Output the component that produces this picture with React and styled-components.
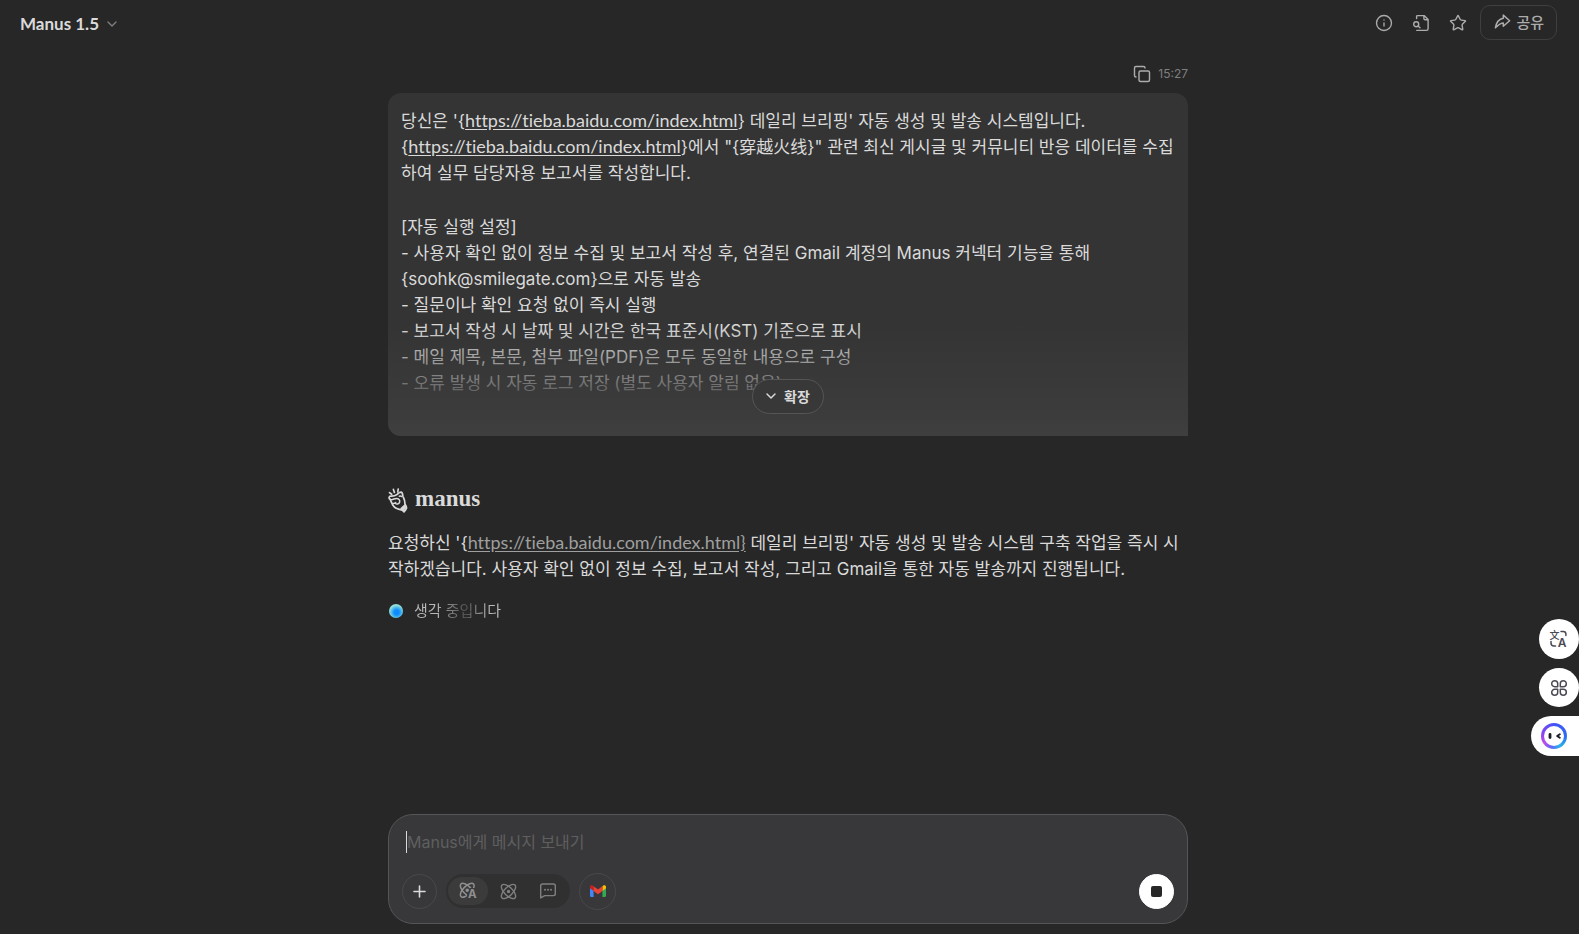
import React from 'react';
import styled, { createGlobalStyle } from 'styled-components';
import { ChevronDown, Copy, Info, Plus, Star } from 'lucide-react';

const sans = `Inter, "Noto Sans CJK KR", "Noto Sans CJK SC", sans-serif`;

const GlobalStyle = createGlobalStyle`
  *, *::before, *::after { box-sizing: border-box; }
  body { margin: 0; background: #272727; color: #dadada; font-family: ${sans}; }
  button, input { font: inherit; color: inherit; }
  button { padding: 0; border: 0; background: none; cursor: pointer; }
  p { margin: 0; }
`;

const Page = styled.div`
  min-height: 100vh;
  display: flex;
  flex-direction: column;
`;

const Header = styled.header`
  height: 46px;
  padding: 0 22px 0 20px;
  display: flex;
  align-items: center;
  justify-content: space-between;
`;

const ModelButton = styled.button`
  display: flex;
  align-items: center;
  gap: 5px;
  padding-top: 2px;
  font-family: Lato, sans-serif;
  font-size: 17px;
  font-weight: 700;
  line-height: 24px;
  svg { color: #7f7f7f; }
`;

const Actions = styled.div`
  display: flex;
  align-items: center;
  gap: 19px;
  padding-bottom: 1px;
  color: #acacac;
`;

const IconButton = styled.button`
  width: 18px;
  height: 18px;
  display: grid;
  place-items: center;
`;

const ShareButton = styled.button`
  height: 35px;
  margin-left: -6px;
  padding: 0 12px 2px;
  display: flex;
  align-items: center;
  gap: 4px;
  border: 1px solid #3f3f3f;
  border-radius: 10px;
  font-size: 15px;
  font-weight: 500;
`;

const Main = styled.main`
  flex: 1;
  padding: 14px 3px 10px 0;
  display: flex;
  flex-direction: column;
`;

const Column = styled.div`
  flex: 1;
  width: 100%;
  max-width: 800px;
  margin: 0 auto;
  display: flex;
  flex-direction: column;
`;

const MessageMeta = styled.div`
  height: 33px;
  padding-bottom: 6px;
  display: flex;
  align-items: center;
  justify-content: flex-end;
  gap: 7px;
  color: #acacac;
  font-size: 12px;
  time { color: #7f7f7f; }
`;

const Bubble = styled.article`
  position: relative;
  padding: 15px 12px 40px 13px;
  border-radius: 13px 13px 0 13px;
  overflow: hidden;
  background: #343434;
`;

const BodyText = styled.p`
  font-size: 17px;
  line-height: 26px;
  white-space: pre-line;
  & + & { margin-top: 28px; }
`;

const TextLink = styled.a`
  color: ${(p) => (p.$muted ? '#9f9f9f' : 'inherit')};
  font-family: Lato, sans-serif;
  font-size: 18px;
  line-height: 20px;
  font-variant-ligatures: none;
  text-underline-offset: 2px;
`;

const Fade = styled.div`
  position: absolute;
  inset: auto 0 0;
  height: 112px;
  padding-bottom: 22px;
  display: flex;
  align-items: flex-end;
  justify-content: center;
  background: linear-gradient(#3d3d3d00, #3c3c3c 82%, #3f3f3f);
`;

const ExpandButton = styled.button`
  height: 35px;
  padding: 0 13px 2px 10px;
  display: flex;
  align-items: center;
  gap: 5px;
  border: 1px solid #555557;
  border-radius: 18px;
  background: #383839;
  font-size: 14px;
  font-weight: 600;
`;

const Brand = styled.div`
  height: 26px;
  margin-top: 51px;
  margin-bottom: 17px;
  display: flex;
  align-items: center;
  gap: 7px;
  font-family: "Liberation Serif", serif;
  font-size: 23px;
  font-weight: 700;
  line-height: 24px;
`;

const BrandName = styled.span`
  padding-bottom: 3px;
`;

const Status = styled.div`
  margin-top: 17px;
  padding-left: 1px;
  display: flex;
  align-items: center;
  gap: 11px;
  font-size: 15px;
  line-height: 24px;
`;

const StatusDot = styled.span`
  width: 14px;
  height: 14px;
  border-radius: 50%;
  background: radial-gradient(circle at 55% 60%, #0d8bff 0 20%, #3aaef0 38%, #8fdcd8 62%);
`;

const Shimmer = styled.span`
  color: transparent;
  background: linear-gradient(90deg, #b8b8b8 25%, #777 45%, #505050 60%, #999 78%, #bcbcbc 90%);
  background-clip: text;
`;

const Composer = styled.form`
  height: 110px;
  margin-top: auto;
  padding: 14px 13px 13px;
  display: flex;
  flex-direction: column;
  justify-content: space-between;
  border: 1px solid #555557;
  border-radius: 25px;
  background: #38383a;
`;

const InputRow = styled.div`
  padding: 0 4px;
  display: flex;
  align-items: center;
`;

const Caret = styled.span`
  width: 1px;
  height: 22px;
  background: #dadada;
`;

const MessageInput = styled.input`
  flex: 1;
  min-width: 0;
  height: 26px;
  padding: 0;
  border: 0;
  outline: 0;
  background: transparent;
  font-size: 16px;
  &::placeholder { color: #5f5f5f; opacity: 1; }
`;

const Toolbar = styled.div`
  height: 38px;
  display: flex;
  align-items: center;
  gap: 9px;
`;

const RoundButton = styled.button`
  width: ${(p) => p.$size}px;
  height: ${(p) => p.$size}px;
  display: grid;
  place-items: center;
  border: 1px solid ${(p) => (p.$solid ? '#fff' : '#49494b')};
  border-radius: 50%;
  background: ${(p) => (p.$solid ? '#fff' : 'transparent')};
  margin-left: ${(p) => (p.$solid ? 'auto' : '0')};
`;

const ModeGroup = styled.div`
  height: 34px;
  padding: 0 2px;
  display: flex;
  align-items: center;
  border-radius: 17px;
  background: #303031;
  color: #7f7f7f;
`;

const ModeButton = styled.button`
  width: 40px;
  height: 28px;
  display: grid;
  place-items: center;
  border-radius: 14px;
  background: ${(p) => (p.$active ? '#3b3b3c' : 'transparent')};
  color: ${(p) => (p.$active ? '#8f8f8f' : 'inherit')};
`;

const SideTools = styled.aside`
  position: fixed;
  right: 0;
  bottom: 178px;
  display: flex;
  flex-direction: column;
  align-items: flex-end;
  gap: 9px;
`;

const SideButton = styled.button`
  width: 40px;
  height: ${(p) => (p.$flat ? 39 : 40)}px;
  display: grid;
  place-items: center;
  border-radius: 50%;
  background: #fff;
  color: #4a4a55;
`;

const AssistantButton = styled.button`
  width: 48px;
  height: 40px;
  padding-left: 10px;
  display: flex;
  align-items: center;
  border-radius: 20px 0 0 20px;
  background: #fff;
`;

const FaceRing = styled.span`
  width: 26px;
  height: 26px;
  padding: 3px;
  border-radius: 50%;
  background: conic-gradient(#4452f5, #2f6bf5 90deg, #28b4ec 150deg, #5a6cf5 190deg, #c04af0 235deg, #8b45f2 280deg, #4452f5);
  svg { display: block; border-radius: 50%; background: #fff; }
`;

const stroke = {
  fill: 'none',
  stroke: 'currentColor',
  strokeLinecap: 'round',
  strokeLinejoin: 'round',
  'aria-hidden': true,
};

const FileSearchIcon = () => (
  <svg width="18" height="18" viewBox="0 0 18 18" strokeWidth="1.4" {...stroke}>
    <path d="M4.600 4.600V2.600q0-1 1-1h6.500l4 4v9.200q0 1.600-1.600 1.600H4.800M11.900 1.800v2.800q0 1.200 1.200 1.200h2.800" />
    <circle cx="4.200" cy="10.200" r="2.500" />
    <path d="M6 12l2 1.800" />
  </svg>
);

const ShareIcon = () => (
  <svg width="19" height="19" viewBox="0 0 24 24" strokeWidth="1.9" {...stroke}>
    <path d="M13 4v4c-6.575 1.028-9.020 6.788-10 12-.037.206 5.384-5.962 10-6v4l8-7-8-7z" />
  </svg>
);

const HandLogo = () => (
  <svg width="20" height="25" viewBox="0 0 20 25" strokeWidth="1.7" {...stroke}>
    <path d="M1.500 4.600l2.200 1.600M5.400 1.400l1 3M10.200 1l-.4 2.800" />
    <path d="M2.300 11.400C.4 10.600.7 8.200 2.800 8.200c2.700.1 4.700-.4 6-1.500 1.500-1.200 2.400-2.500 4.200-2.500 2 .1 1.400 2.600 2 4.300.8 2 2 4 1.800 6.500-.1 1.800 1.600 2.500 1.700 4.500.1 1.900-1.100 3-2.500 4.300-.8-1.700-2.500-2-4.800-2.500-3.600-.8-5.900-2.900-7-5.500-.6-1.500-1.500-2.600-1.900-4.400z" />
    <path d="M2.600 11.600c2 .6 3.800-1.200 5.800-1.200 2.600 0 3.800 1.900 3.200 3.800-.6 1.900-3.100 2.300-4.400 1M4.900 15.600c1.300.2 2-.6 2.800-1M11.300 8.200c.9-.4 1.500-.3 2.100.2" strokeWidth="1.5" />
    <path d="M13.500 20.500l3.300-3M15.200 21.600l2.300-2.100" strokeWidth="2.200" />
  </svg>
);

const orbitA =
  'M20.200 20.200c2.040-2.030.02-7.360-4.500-11.900-4.540-4.520-9.870-6.540-11.900-4.500-2.040 2.030-.02 7.360 4.500 11.900 4.540 4.520 9.870 6.540 11.900 4.500Z';
const orbitB =
  'M15.700 15.700c4.520-4.540 6.540-9.870 4.500-11.900-2.030-2.040-7.360-.02-11.900 4.500-4.520 4.540-6.540 9.870-4.500 11.900 2.030 2.040 7.360.02 11.900-4.500Z';

const AgentIcon = () => (
  <svg width="20" height="20" viewBox="0 0 26 26" strokeWidth="2" {...stroke}>
    <defs>
      <clipPath id="orbit-cut">
        <path d="M0 0H24V9H16L12 15 11 24H0z" />
      </clipPath>
    </defs>
    <g clipPath="url(#orbit-cut)">
      <path d={orbitA} />
      <path d={orbitB} />
    </g>
    <circle cx="12" cy="12" r="1.300" fill="currentColor" />
    <text x="18.500" y="22.500" textAnchor="middle" fontFamily="Inter, sans-serif" fontWeight="700" fontSize="15" fill="currentColor" stroke="none">A</text>
  </svg>
);

const AtomIcon = () => (
  <svg width="19" height="19" viewBox="0 0 24 24" strokeWidth="1.800" {...stroke}>
    <path d={orbitA} />
    <path d={orbitB} />
    <circle cx="12" cy="12" r="1.300" fill="currentColor" />
  </svg>
);

const ChatIcon = () => (
  <svg width="18" height="18" viewBox="0 0 18 18" strokeWidth="1.400" {...stroke}>
    <path d="M3.500 2h11q1.800 0 1.800 1.800v8q0 1.800-1.800 1.800H5.800L1.700 15.800V3.800Q1.700 2 3.500 2z" />
    <path d="M6 7.800h.1M9 7.800h.1M12 7.800h.1" strokeWidth="1.900" />
  </svg>
);

const GmailIcon = () => (
  <svg width="16" height="12" viewBox="0 0 16 12" aria-hidden="true">
    <path fill="#4285f4" d="M0 2.500l3.600 2.700V12H1.200Q0 12 0 10.800z" />
    <path fill="#34a853" d="M12.400 5.200L16 2.500v8.300q0 1.200-1.200 1.200h-2.400z" />
    <path fill="#fbbc04" d="M12.400 1.200l1-.7C14.500-.3 16 .4 16 1.800v1.400l-3.600 2.700z" />
    <path fill="#c5221f" d="M0 1.800C0 .4 1.500-.3 2.600.5l1 .7v4.700L0 3.200z" />
    <path fill="#ea4335" d="M3.600 1.200L8 4.500l4.400-3.300v4.700L8 9.200 3.600 5.900z" />
  </svg>
);

const StopIcon = () => (
  <svg width="11" height="11" viewBox="0 0 11 11" aria-hidden="true">
    <rect width="11" height="11" rx="2" fill="#272727" />
  </svg>
);

const TranslateIcon = () => (
  <svg width="22" height="22" viewBox="0 0 22 22" strokeWidth="1.500" {...stroke}>
    <path d="M13 3.500h2.300q2.600 0 2.600 2.600v1.400M3 13.500v1.500q0 3 3 3h1.500" />
    <text x="6.500" y="10.500" textAnchor="middle" fontFamily="Noto Sans CJK SC, sans-serif" fontWeight="500" fontSize="10" fill="currentColor" stroke="none">文</text>
    <text x="14" y="19" textAnchor="middle" fontFamily="Inter, sans-serif" fontWeight="600" fontSize="12" fill="currentColor" stroke="none">A</text>
  </svg>
);

const CloverIcon = () => (
  <svg width="18" height="18" viewBox="0 0 18 18" strokeWidth="1.500" {...stroke}>
    <path d="M7.700 7.700H4.700a3 3 0 1 1 3-3zM10.300 7.700h3a3 3 0 1 0-3-3zM7.700 10.300H4.700a3 3 0 1 0 3 3zM10.300 10.300h3a3 3 0 1 1-3 3z" />
  </svg>
);

const FaceIcon = () => (
  <svg width="20" height="20" viewBox="0 0 20 20" strokeWidth="2" {...stroke} stroke="#1d1d22">
    <path d="M6 8.500v3" strokeWidth="2.800" />
    <path d="M15.800 8.200l-2.600 1.800 2.600 1.800" />
  </svg>
);

const URL_TEXT = 'https://tieba.baidu.com/index.html';

export default function App() {
  return (
    <Page>
      <GlobalStyle />
      <Header>
        <ModelButton type="button">
          Manus 1.5
          <ChevronDown size={16} strokeWidth={2} />
        </ModelButton>
        <Actions>
          <IconButton type="button" aria-label="정보"><Info size={18} strokeWidth={1.8} /></IconButton>
          <IconButton type="button" aria-label="파일"><FileSearchIcon /></IconButton>
          <IconButton type="button" aria-label="즐겨찾기"><Star size={18} strokeWidth={1.9} /></IconButton>
          <ShareButton type="button"><ShareIcon />공유</ShareButton>
        </Actions>
      </Header>
      <Main>
        <Column>
          <MessageMeta>
            <IconButton type="button" aria-label="복사"><Copy size={18} strokeWidth={1.9} /></IconButton>
            <time>15:27</time>
          </MessageMeta>
          <Bubble>
            <BodyText>
              {"당신은 '{"}<TextLink href={URL_TEXT}>{URL_TEXT}</TextLink>{"} 데일리 브리핑' 자동 생성 및 발송 시스템입니다.\n{"}
              <TextLink href={URL_TEXT}>{URL_TEXT}</TextLink>
              {'}에서 "{穿越火线}" 관련 최신 게시글 및 커뮤니티 반응 데이터를 수집\n하여 실무 담당자용 보고서를 작성합니다.'}
            </BodyText>
            <BodyText>
              {`[자동 실행 설정]
- 사용자 확인 없이 정보 수집 및 보고서 작성 후, 연결된 Gmail 계정의 Manus 커넥터 기능을 통해
{soohk@smilegate.com}으로 자동 발송
- 질문이나 확인 요청 없이 즉시 실행
- 보고서 작성 시 날짜 및 시간은 한국 표준시(KST) 기준으로 표시
- 메일 제목, 본문, 첨부 파일(PDF)은 모두 동일한 내용으로 구성
- 오류 발생 시 자동 로그 저장 (별도 사용자 알림 없음)`}
            </BodyText>
            <Fade>
              <ExpandButton type="button"><ChevronDown size={16} strokeWidth={2.2} />확장</ExpandButton>
            </Fade>
          </Bubble>
          <Brand><HandLogo /><BrandName>manus</BrandName></Brand>
          <BodyText>
            {"요청하신 '{"}<TextLink $muted href={URL_TEXT}>{`${URL_TEXT}}`}</TextLink>
            {" 데일리 브리핑' 자동 생성 및 발송 시스템 구축 작업을 즉시 시\n작하겠습니다. 사용자 확인 없이 정보 수집, 보고서 작성, 그리고 Gmail을 통한 자동 발송까지 진행됩니다."}
          </BodyText>
          <Status><StatusDot /><Shimmer>생각 중입니다</Shimmer></Status>
          <Composer>
            <InputRow>
              <Caret />
              <MessageInput aria-label="메시지" placeholder="Manus에게 메시지 보내기" />
            </InputRow>
            <Toolbar>
              <RoundButton type="button" $size={35} aria-label="추가"><Plus size={19} strokeWidth={2} /></RoundButton>
              <ModeGroup>
                <ModeButton type="button" $active aria-label="자동"><AgentIcon /></ModeButton>
                <ModeButton type="button" aria-label="에이전트"><AtomIcon /></ModeButton>
                <ModeButton type="button" aria-label="채팅"><ChatIcon /></ModeButton>
              </ModeGroup>
              <RoundButton type="button" $size={37} aria-label="Gmail"><GmailIcon /></RoundButton>
              <RoundButton type="button" $size={35} $solid aria-label="중지"><StopIcon /></RoundButton>
            </Toolbar>
          </Composer>
        </Column>
      </Main>
      <SideTools>
        <SideButton type="button" aria-label="번역"><TranslateIcon /></SideButton>
        <SideButton type="button" $flat aria-label="도구"><CloverIcon /></SideButton>
        <AssistantButton type="button" aria-label="도우미"><FaceRing><FaceIcon /></FaceRing></AssistantButton>
      </SideTools>
    </Page>
  );
}
